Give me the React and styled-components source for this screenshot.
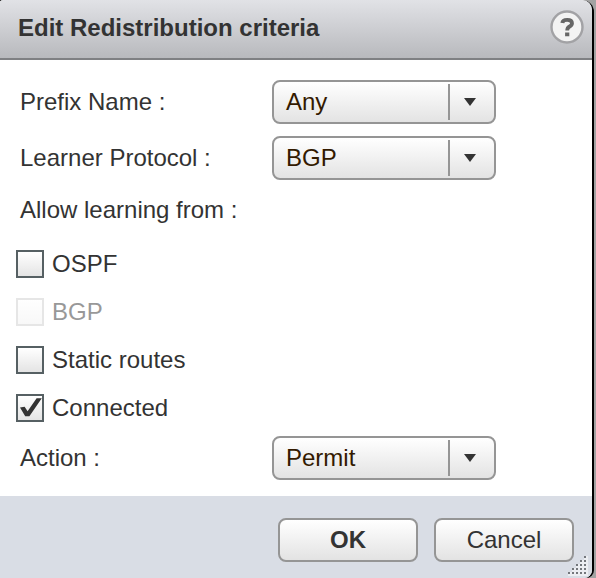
import React from 'react';
import styled, { createGlobalStyle, css } from 'styled-components';

const GlobalStyle = createGlobalStyle`
  * { box-sizing: border-box; }
  body { margin: 0; background: #a3a3a3; overflow: hidden; }
`;

const surface = css`
  border: 2px solid #959595;
  border-radius: 8px;
  background: linear-gradient(#ffffff, #e3e3e3);
`;

const Frame = styled.div`
  width: 594px;
  height: 578px;
  padding-right: 2px;
  border-radius: 0 12px 8px 0;
  background: #000;
`;

const Dialog = styled.section`
  position: relative;
  display: flex;
  flex-direction: column;
  height: 578px;
  border-radius: 4px 10px 8px 0 / 2px 10px 8px 0;
  background: #fff;
  color: #333;
  font: 24px/28px "Liberation Sans", Arial, sans-serif;
  overflow: hidden;
`;

const Header = styled.header`
  display: flex;
  align-items: center;
  justify-content: space-between;
  height: 60px;
  padding: 0 8px 4px 18px;
  border-bottom: 2px solid #7f8083;
  background: linear-gradient(#e1e2e6, #b8b9bd);
`;

const Title = styled.h1`
  margin: 2px 0 0;
  font-size: 24px;
  line-height: 28px;
`;

const HelpButton = styled.button`
  width: 34px;
  height: 34px;
  padding: 0;
  border: 0;
  background: none;
  svg { display: block; }
`;

const Body = styled.main`
  flex: none;
  height: 436px;
  padding: 20px 16px 0;
`;

const Row = styled.div`
  display: flex;
  align-items: center;
  height: ${(p) => p.$height || 44}px;
  margin-bottom: ${(p) => p.$gap || 0}px;
  padding-left: 4px;
`;

const Label = styled.span`
  width: 252px;
`;

const Select = styled.button`
  ${surface}
  display: flex;
  align-items: center;
  width: 224px;
  height: 44px;
  padding: 0;
  color: #331a00;
  font: inherit;
  text-align: left;
`;

const Value = styled.span`
  flex: 1;
  padding-left: 12px;
`;

const Arrow = styled.span`
  display: flex;
  align-items: center;
  width: 46px;
  height: 36px;
  padding-left: 14px;
  border-left: 2px solid #959595;
`;

const Option = styled.label`
  display: flex;
  align-items: center;
  gap: 8px;
  height: 48px;
  opacity: ${(p) => (p.$disabled ? 0.5 : 1)};
`;

const Box = styled.span`
  width: 28px;
  height: 28px;
  border: 2px solid ${(p) => (p.$disabled ? '#cfcfcf' : '#566063')};
  background: ${(p) => (p.$disabled ? 'linear-gradient(#fff, #f3f3f3)' : 'linear-gradient(#fff, #e4e4e4)')};
  svg { display: block; }
`;

const Footer = styled.footer`
  display: flex;
  flex: 1;
  gap: 16px;
  justify-content: flex-end;
  padding: 22px 18px 0 0;
  background: #d9dde5;
`;

const Button = styled.button`
  ${surface}
  width: 140px;
  height: 44px;
  padding: 0;
  color: #333;
  font: inherit;
  font-weight: ${(p) => (p.$primary ? 700 : 400)};
`;

const Grip = styled.svg`
  position: absolute;
  right: 4px;
  bottom: 2px;
`;

const options = [
  { name: 'OSPF' },
  { name: 'BGP', disabled: true },
  { name: 'Static routes' },
  { name: 'Connected', checked: true },
];

const dots = [0, 1, 2, 3, 4].flatMap((row) =>
  Array.from({ length: row + 1 }, (_, i) => [16 - i * 4, row * 4]),
);

function Field({ label, value, gap, height }) {
  return (
    <Row $gap={gap} $height={height}>
      <Label>{label}</Label>
      <Select>
        <Value>{value}</Value>
        <Arrow>
          <svg width="12" height="8"><path d="M0 0H12L6 8Z" fill="#333" /></svg>
        </Arrow>
      </Select>
    </Row>
  );
}

export default function App() {
  return (
    <>
      <GlobalStyle />
      <Frame>
        <Dialog>
          <Header>
            <Title>Edit Redistribution criteria</Title>
            <HelpButton aria-label="Help">
              <svg width="34" height="34" viewBox="0 0 34 34">
                <circle cx="17" cy="17" r="15.5" fill="#f3f3f3" stroke="#a2a2a5" strokeWidth="2.4" />
                <path d="M12.3 13Q12.6 9.8 17.2 9.8Q22 9.8 22 13.2Q22 15.2 19.6 16.5Q17.2 17.8 17.2 20.6" fill="none" stroke="#666" strokeWidth="3.8" />
                <path d="M15.1 22.4h4.2v3.8h-4.2z" fill="#666" />
              </svg>
            </HelpButton>
          </Header>
          <Body>
            <Field label="Prefix Name :" value="Any" gap={12} />
            <Field label="Learner Protocol :" value="BGP" />
            <Row $height={60}><Label>Allow learning from :</Label></Row>
            {options.map((o) => (
              <Option key={o.name} $disabled={o.disabled}>
                <Box $disabled={o.disabled}>
                  {o.checked && (
                    <svg width="24" height="24" viewBox="0 0 24 24">
                      <path d="M2 11.6L6.6 10.8L9.6 15.2L18.6 2.3H23.8L11.4 20.2H7.2Z" fill="#333" />
                    </svg>
                  )}
                </Box>
                {o.name}
              </Option>
            ))}
            <Field label="Action :" value="Permit" height={52} />
          </Body>
          <Footer>
            <Button $primary>OK</Button>
            <Button>Cancel</Button>
          </Footer>
          <Grip width="20" height="20">
            {dots.map(([x, y]) => (
              <g key={`${x}-${y}`}>
                <rect x={x} y={y} width="4" height="4" fill="#eceef2" />
                <rect x={x} y={y} width="2" height="2" fill="#74777c" />
              </g>
            ))}
          </Grip>
        </Dialog>
      </Frame>
    </>
  );
}
